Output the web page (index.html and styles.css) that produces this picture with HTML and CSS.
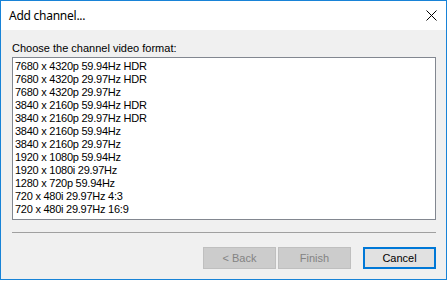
FILE: index.html
```html
<!DOCTYPE html>
<html lang="en">
<head>
    <meta charset="UTF-8">
    <title>Add channel...</title>
    <link rel="stylesheet" href="styles.css">
</head>
<body>
    <div class="window">
        <div class="titlebar">
            <span class="title">Add channel...</span>
            <span class="close">
                <svg width="11" height="11" viewBox="0 0 11 11">
                    <path d="M0.5 0.5 L10.5 10.5 M10.5 0.5 L0.5 10.5" stroke="#000" stroke-width="1" fill="none"/>
                </svg>
            </span>
        </div>

        <div class="content">
            <div class="label">Choose the channel video format:</div>
            <div class="listbox">
                <div class="item">7680 x 4320p 59.94Hz HDR</div>
                <div class="item">7680 x 4320p 29.97Hz HDR</div>
                <div class="item">7680 x 4320p 29.97Hz</div>
                <div class="item">3840 x 2160p 59.94Hz HDR</div>
                <div class="item">3840 x 2160p 29.97Hz HDR</div>
                <div class="item">3840 x 2160p 59.94Hz</div>
                <div class="item">3840 x 2160p 29.97Hz</div>
                <div class="item">1920 x 1080p 59.94Hz</div>
                <div class="item">1920 x 1080i 29.97Hz</div>
                <div class="item">1280 x 720p 59.94Hz</div>
                <div class="item">720 x 480i 29.97Hz 4:3</div>
                <div class="item">720 x 480i 29.97Hz 16:9</div>
            </div>
            <div class="separator"></div>
            <div class="buttons">
                <button class="btn" disabled>&lt; Back</button>
                <button class="btn" disabled>Finish</button>
                <button class="btn btn-default">Cancel</button>
            </div>
        </div>
    </div>
</body>
</html>
```

FILE: styles.css
```css
body {
    margin: 0;
    background: #fff;
    font-family: "Liberation Sans", Arial, sans-serif;
    font-size: 11px;
    color: #000;
}
.window {
    box-sizing: border-box;
    width: 447px;
    height: 280px;
    border: 1px solid #1883d7;
    display: flex;
    flex-direction: column;
    background: #f0f0f0;
}
.titlebar {
    height: 30px;
    background: #fff;
    display: flex;
    align-items: center;
    justify-content: space-between;
    padding: 0 9px 0 8px;
}
.title {
    font-family: "Noto Sans", sans-serif;
    font-size: 12px;
    letter-spacing: -0.25px;
    padding-bottom: 1px;
}
.close {
    display: flex;
    width: 11px;
    height: 11px;
}
.content {
    flex: 1;
    padding: 12px 10px 10px 11px;
    display: flex;
    flex-direction: column;
}
.label {
    line-height: 13px;
    margin-bottom: 2px;
}
.listbox {
    box-sizing: border-box;
    height: 163px;
    background: #fff;
    border: 1px solid #828790;
    padding: 2px 2px;
}
.item {
    line-height: 13px;
    letter-spacing: -0.25px;
    white-space: nowrap;
}
.separator {
    height: 1px;
    background: #a0a0a0;
    margin-top: 12px;
}
.buttons {
    margin-top: 14px;
    display: flex;
    justify-content: flex-end;
    gap: 2px;
}
.btn {
    box-sizing: border-box;
    width: 73px;
    height: 22px;
    font-family: inherit;
    font-size: 11px;
    background: #e1e1e1;
    border: 1px solid #adadad;
    color: #000;
    padding: 0;
}
.btn:disabled {
    background: #cccccc;
    border-color: #bfbfbf;
    color: #838383;
}
.btn-default {
    margin-left: 10px;
    border: 2px solid #0078d7;
}
```
